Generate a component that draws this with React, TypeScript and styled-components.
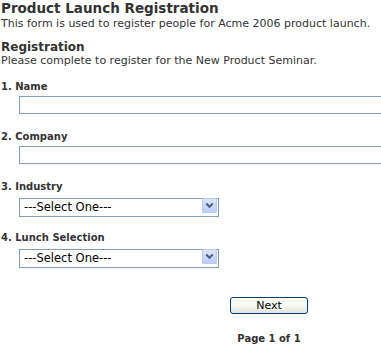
import styled, { createGlobalStyle } from 'styled-components';

const GlobalStyle = createGlobalStyle`
  html, body {
    margin: 0;
    padding: 0;
    background: #fff;
    overflow: hidden;
  }
  body {
    font-family: "DejaVu Sans", Verdana, sans-serif;
    color: #333;
  }
`;

const Page = styled.div`
  width: 540px;
  padding: 0 0 0 1px;
`;

const Title = styled.h1`
  margin: 0;
  font-size: 13.5px;
  line-height: 17px;
  font-weight: 700;
  color: #333;
`;

const Intro = styled.p`
  margin: 0;
  font-size: 11px;
  line-height: 14px;
`;

const Section = styled.div`
  margin-top: 9px;
`;

const SectionTitle = styled.h2`
  margin: 0;
  font-size: 12px;
  line-height: 14px;
  font-weight: 700;
`;

const Questions = styled.div`
  display: flex;
  flex-direction: column;
  gap: 16px;
  margin-top: 12px;
`;

const Question = styled.div`
  display: flex;
  flex-direction: column;
  gap: 3px;
`;

const Label = styled.label`
  font-size: 10px;
  line-height: 13px;
  font-weight: 700;
`;

const TextInput = styled.input`
  margin-left: 18px;
  width: 520px;
  height: 18px;
  box-sizing: border-box;
  border: 1px solid #7f9db9;
  padding: 1px 3px;
  font: 11px "DejaVu Sans", Verdana, sans-serif;
  outline: none;
`;

const SelectBox = styled.div`
  position: relative;
  margin-left: 18px;
  width: 200px;
  height: 19px;
`;

const Select = styled.select`
  appearance: none;
  width: 100%;
  height: 100%;
  box-sizing: border-box;
  border: 1px solid #7f9db9;
  border-radius: 0;
  background: #fff;
  padding: 0 0 0 4px;
  font: 11.5px "DejaVu Sans", Verdana, sans-serif;
  color: #000;
  outline: none;
`;

const DropButton = styled.span`
  position: absolute;
  top: 2px;
  right: 2px;
  width: 15px;
  height: 15px;
  box-sizing: border-box;
  border: 1px solid #b8cbf3;
  border-radius: 1px;
  background: linear-gradient(#d9e5fd, #bacefa);
  display: flex;
  align-items: center;
  justify-content: center;
  pointer-events: none;
`;

const Footer = styled.div`
  width: 536px;
  display: flex;
  flex-direction: column;
  align-items: center;
  margin-top: 31px;
`;

const NextButton = styled.button`
  width: 78px;
  height: 17px;
  box-sizing: border-box;
  border: 1px solid #003c74;
  border-radius: 3px;
  background: linear-gradient(#ffffff 0%, #f4f4f0 60%, #e3e2da 100%);
  font: 11px "DejaVu Sans", Verdana, sans-serif;
  color: #000;
  padding: 0;
  line-height: 14px;
`;

const PageCount = styled.div`
  margin-top: 18px;
  font-size: 10px;
  line-height: 13px;
  font-weight: 700;
`;

const Chevron = () => (
  <svg width="9" height="7" viewBox="0 0 9 7">
    <path d="M1.2 1.5 L4.5 4.8 L7.8 1.5" fill="none" stroke="#4d6185" strokeWidth="2" />
  </svg>
);

const Dropdown = () => (
  <SelectBox>
    <Select defaultValue="">
      <option value="">---Select One---</option>
    </Select>
    <DropButton>
      <Chevron />
    </DropButton>
  </SelectBox>
);

export default function App() {
  return (
    <Page>
      <GlobalStyle />
      <Title>Product Launch Registration</Title>
      <Intro>This form is used to register people for Acme 2006 product launch.</Intro>
      <Section>
        <SectionTitle>Registration</SectionTitle>
        <Intro>Please complete to register for the New Product Seminar.</Intro>
      </Section>
      <Questions>
        <Question>
          <Label>1. Name</Label>
          <TextInput type="text" />
        </Question>
        <Question>
          <Label>2. Company</Label>
          <TextInput type="text" />
        </Question>
        <Question>
          <Label>3. Industry</Label>
          <Dropdown />
        </Question>
        <Question>
          <Label>4. Lunch Selection</Label>
          <Dropdown />
        </Question>
      </Questions>
      <Footer>
        <NextButton type="button">Next</NextButton>
        <PageCount>Page 1 of 1</PageCount>
      </Footer>
    </Page>
  );
}
